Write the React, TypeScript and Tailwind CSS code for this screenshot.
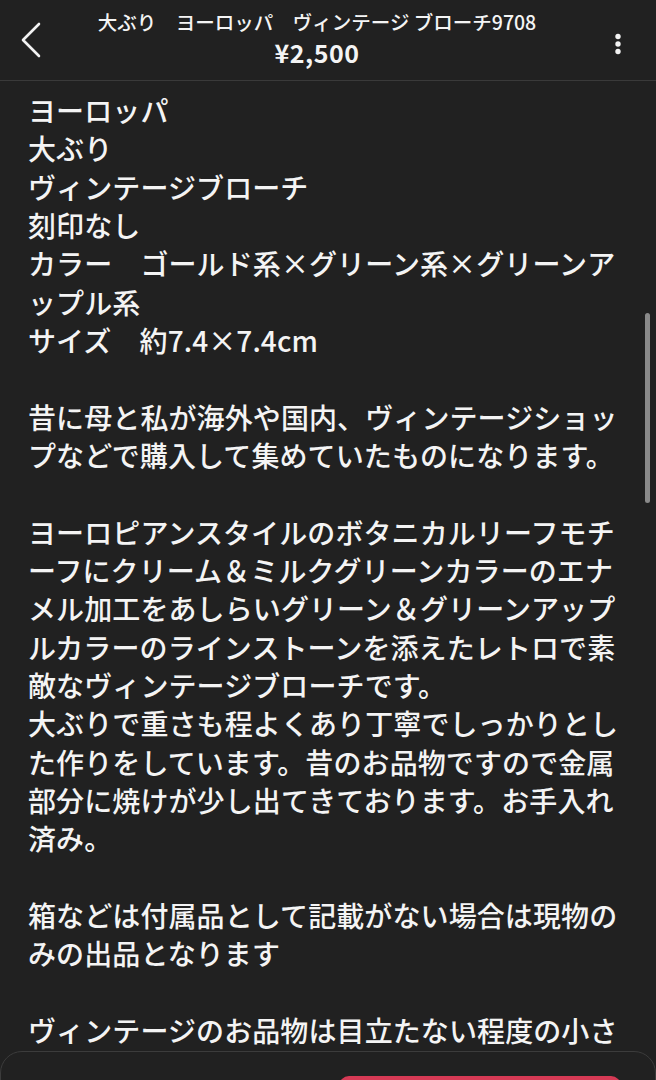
import React from "react";

const lines: string[] = [
  "ヨーロッパ",
  "大ぶり",
  "ヴィンテージブローチ",
  "刻印なし",
  "カラー　ゴールド系×グリーン系×グリーンアップル系",
  "サイズ　約7.4×7.4cm",
  "",
  "昔に母と私が海外や国内、ヴィンテージショップなどで購入して集めていたものになります。",
  "",
  "ヨーロピアンスタイルのボタニカルリーフモチーフにクリーム＆ミルクグリーンカラーのエナメル加工をあしらいグリーン＆グリーンアップルカラーのラインストーンを添えたレトロで素敵なヴィンテージブローチです。",
  "大ぶりで重さも程よくあり丁寧でしっかりとした作りをしています。昔のお品物ですので金属部分に焼けが少し出てきております。お手入れ済み。",
  "",
  "箱などは付属品として記載がない場合は現物のみの出品となります",
  "",
  "ヴィンテージのお品物は目立たない程度の小さな傷や使用感がある場合がございます。",
];

export default function App() {
  return (
    <div
      className="relative w-[656px] h-[1080px] overflow-hidden bg-[#212121] text-[#f4f4f4]"
      style={{ fontFamily: '"Noto Sans CJK JP", "Noto Sans", sans-serif' }}
    >
      <header className="h-[81px] border-b border-[#3a3a3a] flex items-center justify-between pl-[18px] pr-[28px]">
        <div className="w-[30px] flex items-center">
          <svg width="26" height="38" viewBox="0 0 26 38" fill="none">
            <path d="M21 3 L5 19 L21 35" stroke="#f2f2f2" strokeWidth="2.6" strokeLinecap="round" strokeLinejoin="round" />
          </svg>
        </div>
        <div className="flex flex-col items-center -mt-[4px] mr-[22px]">
          <div className="text-[19.5px] leading-[28px] font-medium">大ぶり　ヨーロッパ　ヴィンテージ ブローチ9708</div>
          <div className="text-[25px] leading-[32px] font-bold tracking-[0.5px]">¥2,500</div>
        </div>
        <div className="w-[20px] flex justify-center pt-[8px]">
          <svg width="8" height="22" viewBox="0 0 8 22">
            <circle cx="4" cy="3.5" r="2.7" fill="#f2f2f2" />
            <circle cx="4" cy="11" r="2.7" fill="#f2f2f2" />
            <circle cx="4" cy="18.5" r="2.7" fill="#f2f2f2" />
          </svg>
        </div>
      </header>

      <main className="pl-[28px] pr-[28px] pt-[10px] text-[28px] leading-[38.33px] font-medium tracking-[0.1px]">
        {lines.map((l, i) => (
          <p key={i} className="min-h-[38.33px]">{l}</p>
        ))}
      </main>

      <div className="absolute right-[6px] top-[313px] w-[5px] h-[190px] rounded-full bg-[#8a8a8a]" />

      <div className="absolute left-0 right-0 top-[1051px] h-[60px] rounded-t-[22px] border border-[#3c3c3c] bg-[#212121] flex justify-end pr-[34px] pt-[24px]">
        <div className="w-[282px] h-[50px] rounded-[10px] bg-[#d63a55]" />
      </div>
    </div>
  );
}
